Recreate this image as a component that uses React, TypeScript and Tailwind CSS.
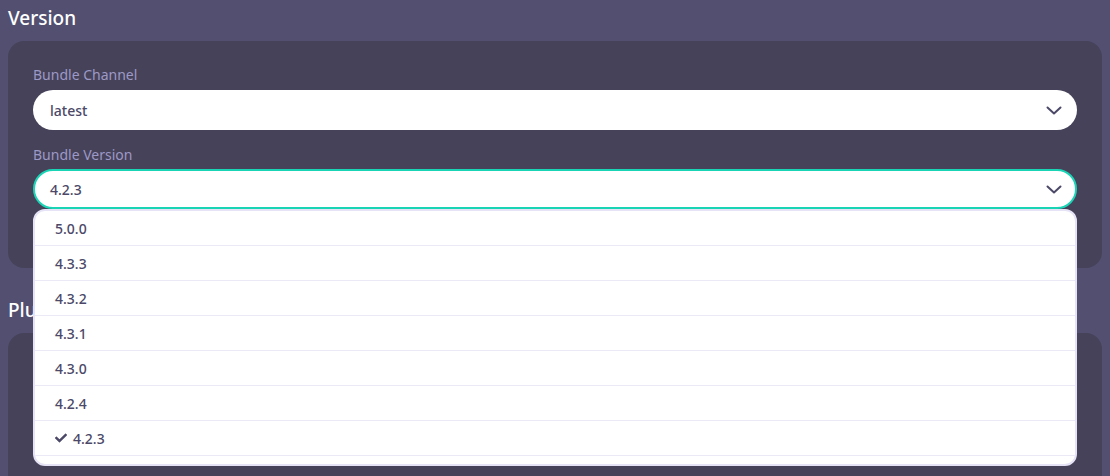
import React from "react";
import { FaCheck } from "react-icons/fa";

const versions = ["5.0.0", "4.3.3", "4.3.2", "4.3.1", "4.3.0", "4.2.4", "4.2.3", "4.2.2"];

function Chevron() {
  return (
    <svg width="16" height="9" viewBox="0 0 16 9" fill="none" className="text-[#4b4868]">
      <path d="M1.5 1.5l6.5 6 6.5-6" stroke="currentColor" strokeWidth="2" strokeLinecap="round" strokeLinejoin="round" />
    </svg>
  );
}

function Select({ value, active }: { value: string; active?: boolean }) {
  return (
    <div
      className={
        active
          ? "flex h-10 items-center justify-between rounded-full border-2 border-[#19d5b6] bg-white pl-[15px] pr-[13px]"
          : "flex h-10 items-center justify-between rounded-full bg-white pl-[17px] pr-[15px]"
      }
    >
      <span className="text-[14px] font-medium text-[#4b4868]">{value}</span>
      <Chevron />
    </div>
  );
}

export default function App() {
  const selected = "4.2.3";
  return (
    <div
      className="relative h-[476px] w-full overflow-hidden bg-[#524f70]"
      style={{ fontFamily: '"Noto Sans", "Open Sans", sans-serif' }}
    >
      <h2 className="px-2 text-[19px] font-medium leading-[36px] text-white">Version</h2>
      <div className="mx-2 mt-[5px] rounded-2xl bg-[#46425a] px-[25px] pb-[59px] pt-6">
        <div className="mb-[5px] text-[14px] leading-5 text-[#9d99c6]">Bundle Channel</div>
        <Select value="latest" />
        <div className="mb-1 mt-[15px] text-[14px] leading-5 text-[#9d99c6]">Bundle Version</div>
        <div className="relative">
          <Select value={selected} active />
          <div className="absolute left-0 right-0 top-10 z-10 h-[257px] overflow-hidden rounded-xl border-2 border-[#e6e3f6] bg-white">
            {versions.map((v) => (
              <div
                key={v}
                className="flex h-[35px] items-center gap-[6px] border-b border-[#ebe9f6] pl-[20px] text-[14px] font-medium text-[#4b4868]"
              >
                {v === selected && <FaCheck className="h-3 w-3" />}
                <span>{v}</span>
              </div>
            ))}
          </div>
        </div>
      </div>
      <h2 className="mt-[24px] px-2 text-[19px] font-medium leading-[36px] text-white">Plugins</h2>
      <div className="mx-2 mt-[5px] h-[200px] rounded-2xl bg-[#46425a]" />
    </div>
  );
}
